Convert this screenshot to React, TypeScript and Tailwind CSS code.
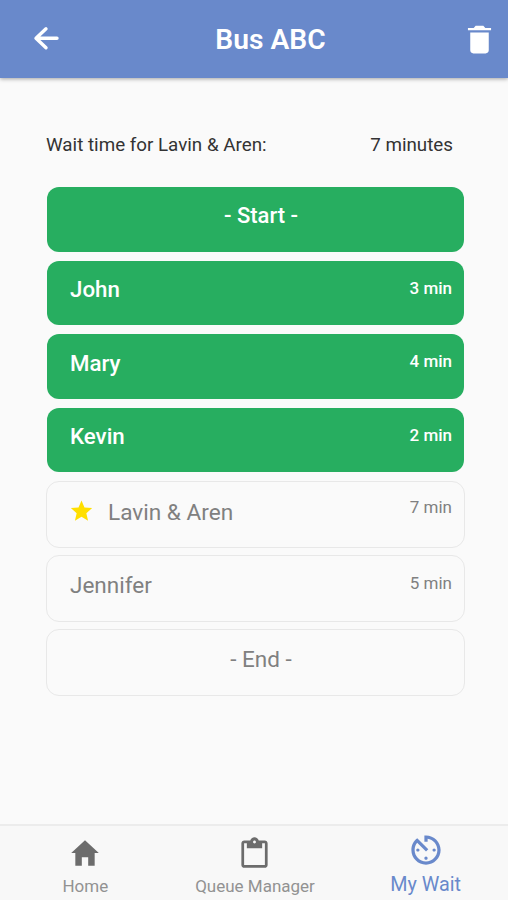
import { IoMdClipboard, IoMdHome, IoMdStar, IoMdTimer, IoMdTrash } from "react-icons/io";

const green = [
  { id: 1, name: "John", time: "3 min" },
  { id: 2, name: "Mary", time: "4 min" },
  { id: 3, name: "Kevin", time: "2 min" },
];

const Header = () => {
  return (
    <header className="flex h-[78px] shrink-0 items-center justify-between bg-[#6989cb] pl-8 pr-[10px] text-white shadow-[0_1px_4px_rgba(0,0,0,0.35)]">
      <button className="w-[48px]">
        <svg
          className="h-7 w-7"
          viewBox="0 0 28 28"
          fill="none"
          stroke="currentColor"
          strokeWidth="3.4"
          strokeLinecap="round"
          strokeLinejoin="round"
        >
          <path d="M14 3.8 4 13.3l10 9.5M5 13.3h20" />
        </svg>
      </button>
      <h1 className="pt-0.5 text-[28.2px] font-semibold leading-8">Bus ABC</h1>
      <button>
        <IoMdTrash className="h-[37px] w-[37px]" />
      </button>
    </header>
  );
};

const Queue = () => {
  return (
    <div className="mt-[30px] flex flex-col">
      {/*Already served*/}
      <div className="flex flex-col gap-[9px] px-px text-white">
        <div className="h-[64.6px] rounded-[12px] bg-[#27ae60] pl-[11px] pt-[15px] text-center text-[22px] font-medium leading-7">
          - Start -
        </div>
        {green.map((item) => (
          <div
            key={item.id}
            className="flex h-[64.6px] justify-between rounded-[12px] bg-[#27ae60] pl-[23px] pr-3 pt-[14.5px] font-medium"
          >
            <span className="text-[22.3px] leading-7">{item.name}</span>
            <span className="pt-[0.5px] text-[17px] leading-6">{item.time}</span>
          </div>
        ))}
      </div>
      {/*Still waiting*/}
      <div className="mt-[9px] flex flex-col gap-[7px] text-[#808080]">
        <div className="flex h-[67px] justify-between rounded-[13px] border-[1.5px] border-[#e8e8e8] pl-[21px] pr-3">
          <div className="flex items-start pt-[17px]">
            <IoMdStar className="-mt-0.5 h-[27px] w-[27px] text-[#ffdf00]" />
            <span className="ml-[13px] text-[22.6px] leading-7">Lavin & Aren</span>
          </div>
          <span className="pt-[13px] text-[17px] leading-6">7 min</span>
        </div>
        <div className="flex h-[67px] justify-between rounded-[13px] border-[1.5px] border-[#e8e8e8] pl-[23px] pr-3 pt-[15px]">
          <span className="text-[22.5px] leading-7">Jennifer</span>
          <span className="text-[17px] leading-6">5 min</span>
        </div>
        <div className="h-[67px] rounded-[13px] border-[1.5px] border-[#e8e8e8] pl-[11px] pt-[15px] text-center text-[22.5px] leading-7">
          - End -
        </div>
      </div>
    </div>
  );
};

const Tabs = () => {
  return (
    <nav className="grid h-[76px] shrink-0 grid-cols-3 border-t-2 border-[#ececec] bg-[#f8f8f8] pl-0.5 text-[#6c6c6c]">
      <button className="flex flex-col items-center pr-0.5 pt-[10px]">
        <IoMdHome className="h-[34px] w-[34px]" />
        <span className="mt-[6px] text-[17px] leading-5 text-[#929292]">Home</span>
      </button>
      <button className="flex flex-col items-center pt-[9px]">
        <IoMdClipboard className="h-[35px] w-[35px]" />
        <span className="mt-[6px] text-[17px] leading-5 text-[#929292]">Queue Manager</span>
      </button>
      <button className="flex flex-col items-center pl-1 pt-[6px] text-[#6989cb]">
        <IoMdTimer className="h-9 w-9" />
        <span className="mt-[5px] text-[19.8px] leading-6">My Wait</span>
      </button>
    </nav>
  );
};

const App = () => {
  return (
    <div className="flex h-[900px] w-[508px] flex-col bg-[#fafafa] font-['Roboto',sans-serif]">
      <Header />
      <main className="flex-1 pl-[46px] pr-[43px] pt-[55px]">
        <div className="flex justify-between pr-3 text-[18.8px] leading-6 text-[#333]">
          <span>Wait time for Lavin & Aren:</span>
          <span>7 minutes</span>
        </div>
        <Queue />
      </main>
      <Tabs />
    </div>
  );
};

export default App;
